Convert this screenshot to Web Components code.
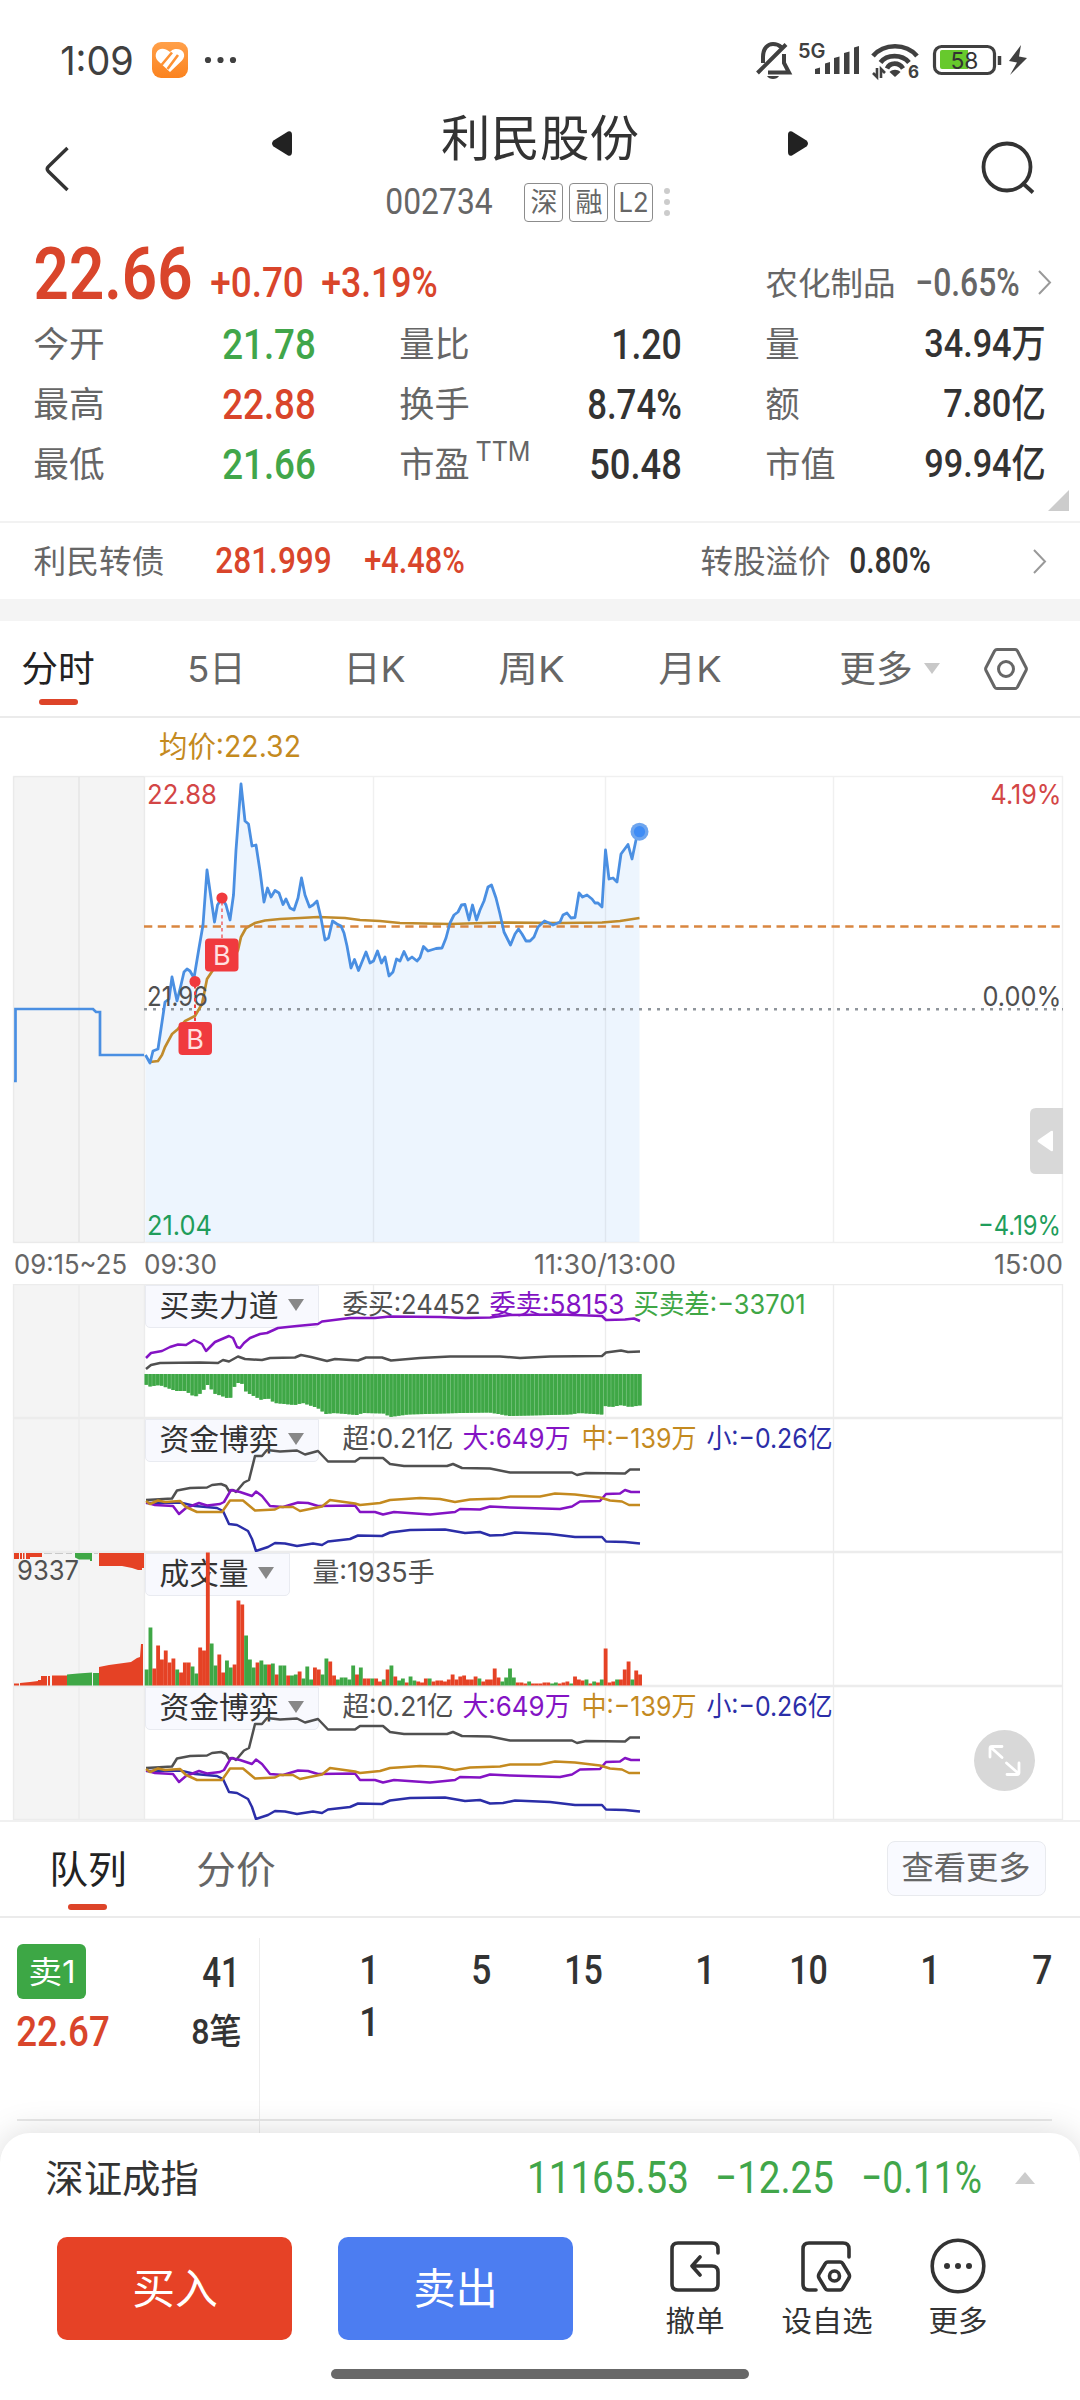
<!DOCTYPE html>
<html lang="zh-CN">
<head>
<meta charset="utf-8">
<title>利民股份 002734</title>
<style>
    html, body {
        margin: 0;
        background: #fff;
    }

    body {
        width: 1080px;
        height: 2400px;
        overflow: hidden;
        font-family: Inter, "Noto Sans CJK SC", sans-serif;
        color: #333;
    }
</style>
</head>
<body>
<stock-page></stock-page>

<script>
const SANS = 'Inter, "Noto Sans CJK SC", sans-serif';
const DIN = 'Roboto, "Noto Sans CJK SC", sans-serif';

function define(name, html, setup) {
	const template = document.createElement('template');
	template.innerHTML = html;

	window.customElements.define(name, class extends HTMLElement {
		constructor() {
			super();
			this.attachShadow({ mode: 'open' }).appendChild(template.content.cloneNode(true));
		}

		connectedCallback() {
			if (setup) setup(this, this.shadowRoot);
		}
	});
}

// one line of text, condensed or stretched to a given width
define('fit-text', `
    <style>
        :host { display: block; flex: none; }
        svg { display: block; overflow: visible; }
    </style>
    <svg><text lengthAdjust="spacingAndGlyphs" fill="currentColor"></text></svg>
`, (el, root) => {
	const w = +el.getAttribute('w');
	const size = +el.getAttribute('size');
	const din = el.hasAttribute('din');
	const svg = root.querySelector('svg');
	const text = root.querySelector('text');
	const pad = size * 0.02;
	svg.setAttribute('width', w);
	svg.setAttribute('height', size);
	text.setAttribute('x', -pad);
	text.setAttribute('y', size * (din ? 0.845 : 0.86));
	text.setAttribute('font-size', size);
	text.setAttribute('font-weight', el.getAttribute('weight') || 400);
	text.setAttribute('font-family', din ? DIN : SANS);
	text.setAttribute('textLength', w + pad * 2);
	text.textContent = el.textContent;
});

define('status-bar', `
    <style>
        :host { display: flex; height: 100px; align-items: center; padding: 20px 0 0 61px; box-sizing: border-box; color: #404040; }
        .app { margin-left: 19px; }
        .dots { margin-left: 16px; }
        .icons { margin-left: 503px; }
        svg { display: block; flex: none; }
    </style>
    <fit-text w="72" size="39">1:09</fit-text>
    <svg class="app" width="36" height="36" viewBox="0 0 36 36">
        <defs><linearGradient id="o" x2="0" y2="1"><stop stop-color="#ffa04a"/><stop offset="1" stop-color="#fb831f"/></linearGradient></defs>
        <rect width="36" height="36" rx="9" fill="url(#o)"/>
        <path d="M18 30L6 19C0 12 7 4 14 7.500q2.500 1 4 2.500 2-2.500 5-3C31 6 35 13 30 18.500z" fill="#fff"/>
        <path d="M9.500 23L20 10.500M15.500 27L26 13" stroke="#fd9235" stroke-width="2.600" fill="none"/>
    </svg>
    <svg class="dots" width="34" height="8" viewBox="0 0 34 8" fill="#404040"><circle cx="4" cy="4" r="3.100"/><circle cx="16.500" cy="4" r="3.100"/><circle cx="29" cy="4" r="3.100"/></svg>
    <svg class="icons" width="310" height="60" viewBox="741 30 310 60" fill="none" stroke="#404040" stroke-width="4">
        <path d="M757.500 73L786 44.500M763 63V57C763 48 768 44 773 44c3 0 6 1 8 3M784 54v9l5 9.500h-21"/>
        <path d="M767 76h12c-2 4-10 4-12 0z" fill="#404040" stroke="none"/>
        <text x="798" y="58" font-size="20" font-weight="600" font-family="Inter, sans-serif" textLength="27.500" lengthAdjust="spacingAndGlyphs" fill="#404040" stroke="none">5G</text>
        <path d="M815 74v-5l5-1.500V74zM825 74V63.500l5-1.500v12zM834 74V58l5.500-1.500V74zM844 74V53l5.500-1.500V74zM854 74V47.500l5-1.500v28z" fill="#404040" stroke="none"/>
        <path d="M873 56C884 43 906 43 917 56M880.500 62.500C887 54 902 54 909 62.500M887 68.500C890 62 899 62 903 68.500" stroke-width="4.700"/>
        <path d="M889.500 72c3-3 8-3 11 0l-5.500 5z" fill="#404040" stroke="none"/>
        <path d="M873 73l4 4V68M881 78v-9l4 4" stroke-width="2.600"/>
        <text x="908" y="78" font-size="17" font-weight="700" font-family="Inter, sans-serif" fill="#404040" stroke="none">6</text>
        <rect x="934.500" y="46.500" width="60" height="27" rx="7" stroke-width="3.200"/>
        <path d="M942 50h26v19h-26q-2 0-2-2V52q0-2 2-2z" fill="#67c92d" stroke="none"/>
        <text x="950.500" y="68.500" font-size="23" font-family="Inter, sans-serif" textLength="28" lengthAdjust="spacingAndGlyphs" fill="#333" stroke="none">58</text>
        <path d="M999.500 56v9" stroke-width="3.500"/>
        <path d="M1021 45l-12 16 8 1.500L1010 75l17-17-8-1.500z" fill="#404040" stroke="none"/>
    </svg>
`);

define('stock-header', `
    <style>
        :host { display: flex; height: 135px; align-items: flex-start; color: #333; }
        svg { display: block; flex: none; }
        .back { margin: 46px 0 0 44px; }
        .prev { margin: 31px 0 0 202px; }
        .center { width: 496px; display: flex; flex-direction: column; align-items: flex-start; }
        .name { margin: 14px 0 0 150px; }
        .sub { display: flex; align-items: center; margin: 19px 0 0 94px; height: 40px; }
        .code { color: #666; margin-right: 32px; }
        .tag { box-sizing: border-box; width: 39px; height: 39px; border: 1.5px solid #8c8c8c; border-radius: 4px; margin-right: 6px; display: flex; align-items: center; justify-content: center; color: #666; }
        .next { margin-top: 31px; }
        .search { margin: 41px 0 0 173px; }
    </style>
    <svg class="back" width="26" height="46" viewBox="0 0 26 46"><path d="M23.500 2L4.500 20.500q-2.500 2.500 0 5L23.500 44" fill="none" stroke="#333" stroke-width="3.400"/></svg>
    <svg class="prev" width="20" height="25" viewBox="0 0 20 25"><path d="M0 12.500q0-1.500 1.500-3L16 .500Q20-.500 20 4v17q0 4.500-4 3.500L1.500 15.500Q0 14 0 12.500z" fill="#222"/></svg>
    <div class="center">
        <fit-text class="name" w="196" size="49">利民股份</fit-text>
        <div class="sub">
            <fit-text class="code" din w="106" size="36">002734</fit-text>
            <div class="tag"><fit-text w="26" size="27">深</fit-text></div>
            <div class="tag"><fit-text w="26" size="27">融</fit-text></div>
            <div class="tag"><fit-text w="29" size="27">L2</fit-text></div>
            <svg style="margin-left:5px" width="6" height="30" viewBox="0 0 6 30" fill="#ccc"><circle cx="3" cy="4" r="3"/><circle cx="3" cy="15" r="3"/><circle cx="3" cy="26" r="3"/></svg>
        </div>
    </div>
    <svg class="next" width="20" height="25" viewBox="0 0 20 25"><path d="M20 12.500q0-1.500-1.500-3L4 .500Q0-.500 0 4v17q0 4.500 4 3.500l14.500-9Q20 14 20 12.500z" fill="#222"/></svg>
    <svg class="search" width="56" height="56" viewBox="0 0 56 56" fill="none" stroke="#333" stroke-width="3.800"><circle cx="26" cy="26" r="23.500"/><path d="M41 41.500l11 10"/></svg>
`);

define('quote-board', `
    <style>
        :host { display: block; height: 288px; color: #333; border-bottom: 2px solid #f2f2f2; box-sizing: border-box; }
        .top { display: flex; align-items: flex-start; padding-left: 35px; height: 79px; }
        .red { color: #d9452b; }
        .green { color: #41a64a; }
        .gray { color: #666; }
        .row { display: grid; grid-template-columns: 281px 366px 364px; column-gap: 0; height: 60px; padding-left: 34px; align-items: center; }
        .cell { display: flex; justify-content: space-between; align-items: center; }
        .cell + .cell { padding-left: 85px; }
        .cell fit-text:first-child { color: #666; }
        .ttm { color: #666; margin: -26px auto 0 7px; }
        svg { display: block; }
        .more { margin: -4px 0 0 1048px; }
    </style>
    <div class="top">
        <fit-text class="red" weight="600" din w="156" size="73" style="margin-top:2px">22.66</fit-text>
        <fit-text class="red" weight="500" din w="92" size="43" style="margin:26px 0 0 20px">+0.70</fit-text>
        <fit-text class="red" weight="500" din w="115" size="43" style="margin:26px 0 0 19px">+3.19%</fit-text>
        <fit-text class="gray" w="129" size="32" style="margin:32px 0 0 329px">农化制品</fit-text>
        <fit-text class="gray" weight="500" din w="103" size="39" style="margin:28px 0 0 21px">−0.65%</fit-text>
        <svg style="margin:34px 0 0 18px" width="16" height="27" viewBox="0 0 16 27"><path d="M2 2l11 11.500L2 25" fill="none" stroke="#999" stroke-width="2"/></svg>
    </div>
    <div class="row">
        <div class="cell"><fit-text w="70" size="35">今开</fit-text><fit-text class="green" weight="500" din w="92" size="43">21.78</fit-text></div>
        <div class="cell"><fit-text w="69" size="35">量比</fit-text><fit-text weight="500" din w="69" size="43">1.20</fit-text></div>
        <div class="cell"><fit-text w="33" size="35">量</fit-text><fit-text weight="500" din w="120" size="39" style="margin-top:-2px">34.94万</fit-text></div>
    </div>
    <div class="row">
        <div class="cell"><fit-text w="70" size="35">最高</fit-text><fit-text class="red" weight="500" din w="92" size="43">22.88</fit-text></div>
        <div class="cell"><fit-text w="69" size="35">换手</fit-text><fit-text weight="500" din w="93" size="43">8.74%</fit-text></div>
        <div class="cell"><fit-text w="33" size="35">额</fit-text><fit-text weight="500" din w="101" size="39" style="margin-top:-2px">7.80亿</fit-text></div>
    </div>
    <div class="row">
        <div class="cell"><fit-text w="70" size="35">最低</fit-text><fit-text class="green" weight="500" din w="92" size="43">21.66</fit-text></div>
        <div class="cell"><fit-text w="69" size="35">市盈</fit-text><fit-text class="ttm" w="54" size="27">TTM</fit-text><fit-text weight="500" din w="91" size="43">50.48</fit-text></div>
        <div class="cell"><fit-text w="69" size="35">市值</fit-text><fit-text weight="500" din w="120" size="39" style="margin-top:-2px">99.94亿</fit-text></div>
    </div>
    <svg class="more" width="21" height="21" viewBox="0 0 21 21"><path d="M21 0v21H0z" fill="#ccc"/></svg>
`);

define('bond-bar', `
    <style>
        :host { display: flex; align-items: center; height: 98px; padding-left: 34px; box-sizing: border-box; border-bottom: 22px solid #f4f4f4; color: #333; }
        .red { color: #d9452b; }
        .gray { color: #666; }
    </style>
    <fit-text class="gray" w="130" size="32">利民转债</fit-text>
    <fit-text class="red" weight="500" din w="115" size="36" style="margin-left:52px">281.999</fit-text>
    <fit-text class="red" weight="500" din w="99" size="36" style="margin-left:34px">+4.48%</fit-text>
    <fit-text class="gray" w="129" size="32" style="margin-left:237px">转股溢价</fit-text>
    <fit-text weight="500" din w="80" size="36" style="margin-left:20px">0.80%</fit-text>
    <svg style="margin-left:102px" width="16" height="27" viewBox="0 0 16 27"><path d="M2 2l11 11.500L2 25" fill="none" stroke="#999" stroke-width="2"/></svg>
`);

define('period-tabs', `
    <style>
        :host { display: flex; align-items: center; height: 97px; box-sizing: border-box; border-bottom: 2px solid #ebebeb; padding-left: 22px; color: #666; }
        .on { color: #222; position: relative; }
        .on::after { content: ""; position: absolute; left: 17px; top: 48px; width: 39px; height: 6px; border-radius: 3px; background: #dd4429; }
        svg { flex: none; display: block; }
    </style>
    <fit-text class="on" w="72" size="36">分时</fit-text>
    <fit-text w="57" size="36" style="margin-left:94px">5日</fit-text>
    <fit-text w="61" size="36" style="margin-left:99px">日K</fit-text>
    <fit-text w="65" size="36" style="margin-left:94px">周K</fit-text>
    <fit-text w="62" size="36" style="margin-left:95px">月K</fit-text>
    <fit-text w="72" size="36" style="margin-left:119px">更多</fit-text>
    <svg style="margin-left:12px" width="16" height="11" viewBox="0 0 16 11"><path d="M0 0h16L8 11z" fill="#c8c8c8"/></svg>
    <svg style="margin-left:44px" width="44" height="44" viewBox="0 0 44 44" fill="none" stroke="#666" stroke-width="3"><path d="M13 2.500h18q1.500 0 2.500 1.500L42 20.500q.800 1.500 0 3L33.500 40q-1 1.500-2.500 1.500H13q-1.500 0-2.500-1.500L2 23.500q-.800-1.500 0-3L10.500 4q1-1.500 2.500-1.500z"/><circle cx="22" cy="22" r="7.500"/></svg>
`);

// intraday price chart, drawn in page coordinates
const PRICE = '145.500,1055 150,1063 153,1051 158,1049 165,1002 169,999 172,977 177,1001 181,985 184,972 187,969 190,971 194,978 199,948 203,925 207,870 211,898 214.500,922 217.500,905 222,898 226,905 230,920 233.500,895 236,850 241,784 245,821 248.500,824 252,846 256,845 260,871 264,902 267.500,888 271,897 275,890.500 279,893 283,904.500 286,899 290,908 294,910 298,898 301.500,878 305,895 309.500,907 313,905 317,901 321,918 325,940 328.500,938 332.500,921 337,924 341,926 344,933 347,946 351,968 354.500,959.500 358.500,970.500 366,952 370,963 373.500,961 377.500,951 381.500,963 385,957 389,976 393,972 396.500,959 400,961 404,951.500 408,960 412,957 417,961 420,957.500 423.500,946.500 428,951 436,948.500 442,948 446,938 450,923 454,915 458,912 461.500,905 465,904.500 469,920 472.500,905 476.500,920 480,910 484,901 488,887 491.500,885 496,898 500,914 504,932 510.500,945 515,934 518.500,929 522,934 526,941 530,941 534,937 538,927 544.500,921 549,923 553,925 560,922 563,915 567,913 571,918 575,917.500 579,893 582.500,897 587,895 592,899 595,903 598,903 602,907 605.500,850 609,879 613,878 617,882 621,854 628,844.500 632,859 636,840 639.500,831';
const AVERAGE = '150,1062 158,1061 162,1055 165,1047 172,1034 178,1029 185,1021 195,1016 202,1004 207,979 213,970 230,965 238,950 241,937 246,928 255,923 265,920.500 280,919 300,918 318,917 345,918 360,920 380,921 400,923 450,924 500,922.500 560,923 602,922.500 620,921 639.500,918';

define('price-chart', `
    <style>
        :host { display: block; height: 566px; }
        svg { display: block; }
    </style>
    <svg width="1080" height="566" viewBox="0 718 1080 566" fill="none" font-family='Inter, "Noto Sans CJK SC", sans-serif' font-size="27.500">
        <text x="159" y="757" font-size="29.500" fill="#c48a1f" textLength="142" lengthAdjust="spacingAndGlyphs">均价:22.32</text>
        <rect x="13.500" y="776.500" width="131" height="466" fill="#f4f4f4"/>
        <polygon fill="#edf5fe" points="${PRICE} 639.500,1242 145.500,1242"/>
        <path d="M13.500 776.500H1062.500V1242.500H13.500zM79 777v465M144.500 777v465M373.500 777v465M605.500 777v465M833.500 777v465" stroke="#000" stroke-opacity=".06" stroke-width="1.500"/>
        <path d="M144 1009.300H1063" stroke="#8f959b" stroke-width="2.600" stroke-dasharray="3 6"/>
        <polyline points="14,1081 15.500,1081 15.500,1009 93,1009 96,1012 100,1012 100,1055 144,1055" stroke="#4a8fe2" stroke-width="2.700"/>
        <polyline points="${AVERAGE}" stroke="#c08b2c" stroke-width="2.700"/>
        <path d="M144 926.500H1061" stroke="#d98640" stroke-width="2.400" stroke-dasharray="8.300 5.450"/>
        <polyline points="${PRICE}" stroke="#4a8fe2" stroke-width="2.800" stroke-linejoin="round"/>
        <text x="147" y="803.500" fill="#d34646" textLength="70" lengthAdjust="spacingAndGlyphs">22.88</text>
        <text x="147" y="1005.500" fill="#505050" textLength="61" lengthAdjust="spacingAndGlyphs">21.96</text>
        <text x="147" y="1235" fill="#1f9d5b" textLength="65" lengthAdjust="spacingAndGlyphs">21.04</text>
        <text x="990.500" y="803.500" fill="#d34646" textLength="71" lengthAdjust="spacingAndGlyphs">4.19%</text>
        <text x="982.500" y="1005.500" fill="#505050" textLength="79" lengthAdjust="spacingAndGlyphs">0.00%</text>
        <text x="978" y="1235" fill="#1f9d5b" textLength="83" lengthAdjust="spacingAndGlyphs">−4.19%</text>
        <g stroke="#f04040" stroke-dasharray="3.500 3"><path d="M195 985v37" stroke-width="2"/><path d="M222 902v37" stroke-width="1.200"/></g>
        <g fill="#f03a3e"><circle cx="195" cy="981.500" r="5.600"/><circle cx="222" cy="898" r="5.600"/><rect x="178.500" y="1022" width="33.500" height="33" rx="4"/><rect x="205" y="938.500" width="33.500" height="33" rx="4"/></g>
        <g fill="#ffe0e0" font-size="27" text-anchor="middle"><text x="195.200" y="1048.500">B</text><text x="221.900" y="965">B</text></g>
        <circle cx="639.500" cy="831.700" r="9" fill="#6ea5ee"/><circle cx="639.500" cy="831.700" r="5.600" fill="#3f8cf5"/>
        <path d="M1063 1108h-27q-6 0-6 6v54q0 6 6 6h27z" fill="#d8d8d8"/>
        <path d="M1053 1132v18q0 2-2 1l-13-9q-1-1 0-2l13-9q2-1 2 1z" fill="#fff"/>
        <g fill="#666">
            <text x="14" y="1273.500" textLength="113" lengthAdjust="spacingAndGlyphs">09:15~25</text>
            <text x="144" y="1273.500" textLength="73" lengthAdjust="spacingAndGlyphs">09:30</text>
            <text x="534" y="1273.500" textLength="142" lengthAdjust="spacingAndGlyphs">11:30/13:00</text>
            <text x="994" y="1273.500" textLength="69" lengthAdjust="spacingAndGlyphs">15:00</text>
        </g>
    </svg>
`);

// every indicator pane is 134px high; its drawing lies over the title chip
const INK = '#505050', PURPLE = '#8413c4', GOLD = '#c48a1f', BLUE = '#2b2ea8', GREEN = '#3fa746', RED = '#e54225';
const polyline = (points, color) => `<polyline points="${points}" stroke="${color}" stroke-width="2.500" stroke-linejoin="round"/>`;

const FLOW = [
	['146,1503 180,1502.500 195,1506 217,1508 223,1511 229,1524 237,1525 248,1531 252,1539 256,1551 268,1547 275,1543 285,1543.500 297,1546 313,1543.500 322,1545 328,1541.500 350,1539 358,1535.500 382,1536 390,1532.500 410,1530 445,1529.500 465,1533 480,1532 490,1535.500 503,1535 515,1532.500 550,1534 575,1537 602,1537 606,1541.500 625,1542 640,1543.500', BLUE],
	['146,1500 155,1499.500 172,1498.500 177,1490.500 190,1488 207,1487.500 212,1485 221,1484 226,1486 229,1491 233,1490 236,1492 244,1482.500 249,1480 255,1456 262,1456 267,1450 280,1451.500 297,1450.500 305,1454.500 318,1451 328,1461.500 355,1461.500 360,1458 383,1458 390,1464 404,1466 447,1466 453,1464 462,1468 490,1468.500 510,1472.500 572,1472.500 577,1475 586,1473 625,1473.500 630,1469.500 640,1469.500', INK],
	['146,1502.500 155,1505 173,1506 179,1514 186,1508 199,1503 207,1505.500 220,1504 224,1502 231,1490 240,1492 252,1496 256,1491.500 262,1496 270,1506 283,1507 298,1502.500 308,1503 318,1506 355,1505.500 360,1512 375,1512 383,1514.500 394,1512 430,1514.500 455,1512 460,1509 480,1509.500 490,1506.500 510,1507.500 560,1509 572,1506.500 580,1501.500 600,1501 606,1494 620,1493.500 625,1490 631,1492 640,1492', PURPLE],
	['146,1501 150,1504 158,1500.500 165,1502 180,1501 186,1507 197,1512 222,1512 230,1500.500 243,1500.500 255,1510.500 275,1509.500 280,1507 293,1507 300,1511 322,1506.500 330,1500 355,1503.500 360,1505 380,1503 390,1500 420,1498 440,1499 455,1502 470,1499.500 500,1498.500 510,1496.500 540,1496.500 555,1493.500 575,1494.500 600,1497.500 610,1500.500 622,1501.500 629,1505 640,1505', GOLD],
].map(([points, color]) => polyline(points, color)).join('');

const ORDER_GAP = [145,1384,150,1386.5,160,1385,176,1391,186,1391,195,1397,203,1392,206,1385,210,1385,213,1393,222,1396,230,1399,234,1392,235,1383,242,1383,244,1390,250,1394,262,1400,268,1398,275,1403,295,1405,303,1403,318,1408,326,1414,335,1413,357,1415,363,1413,385,1413.5,390,1417,408,1414.5,460,1413,490,1412.5,510,1416,570,1414.5,580,1413,602,1414.5,605,1406,612,1407,622,1405,630,1407,643,1405];

function gapBars() {
	let out = '';
	let k = 0;
	for (let i = 0; i < 130; i++) {
		const x = 144.6 + i * 3.825;
		while (k < ORDER_GAP.length - 4 && ORDER_GAP[k + 2] < x + 2) k += 2;
		const t = Math.max(0, (x + 2 - ORDER_GAP[k]) / (ORDER_GAP[k + 2] - ORDER_GAP[k]));
		const y = ORDER_GAP[k + 1] + t * (ORDER_GAP[k + 3] - ORDER_GAP[k + 1]);
		out += `<rect x="${x}" y="1374" width="3.900" height="${y - 1374}" fill="#73c27a"/><rect x="${x}" y="1374" width="3.200" height="${y - 1374}" fill="#3fa746"/>`;
	}
	return out;
}

// minute volumes: colour and bar height
const VOLUME = 'g16 g58 r17 r40 r26 r35 r23 r27 g16 r13 r23 r23 g19 g12 r38 r35 r133 g42 g20 r31 r13 g25 g18 r21 r85 r81 g50 g26 g18 r23 g25 g21 r21 g22 r11 g20 g20 r10 g10 g11 r14 g7 g19 g6 r18 r16 g11 g27 r24 r10 g6 g8 g8 g6 g20 r11 g18 r7 r7 g7 r7 r4 g6 r16 g20 r9 g5 g7 r3 g9 g5 r4 r3 r7 g7 r4 r5 r5 r4 r6 r11 r6 r9 r10 r6 r6 r9 g7 r4 r6 r6 r17 r8 g4 g8 g17 g8 r3 r3 r2 g4 r2 r2 r2 r3 r3 g2 g3 r2 r3 r4 g2 r9 r6 r5 g6 r2 g4 r3 g6 r37 r3 r4 g6 r6 r16 r24 g6 r15 r11';

function volumeBars() {
	let out = VOLUME.split(' ').map((v, i) => {
		const h = +v.slice(1);
		return `<rect x="${144.7 + i * 3.825}" y="${1685.5 - h}" width="3.850" height="${h}" fill="${v[0] === 'r' ? RED : GREEN}"/>`;
	}).join('');
	// call auction, matched volume below and unmatched on top
	out += `<path fill="${RED}" d="M14 1685.500v-2h5v2zM20 1685.500v-2.500l10-1 8-1v-1h3V1676h6v9.500zM48 1685.500V1676h2v9.500zM52 1685.500v-10h15v10zM99 1685.500V1667l10-2 22-3 6-4 3-1 1-13h2v41.500zM14 1553h5v6h-5zM20 1553h2v6h-2zM23 1553h1.500v6H23zM26 1553h16v4h-12v2h-4zM99 1553h45v15h-2v2h-4l-6-2-10-2H99z"/>`;
	out += `<path fill="${GREEN}" d="M67 1685.500v-11l11-1 14-1v13zM93 1685.500V1673h6v12.500zM75 1553h17v8h-2v-1.500h-11l-4-2z"/>`;
	out += '<path d="M44 1553.500h28M94 1553.500h4" stroke="#c9c9c9" stroke-dasharray="8 3"/>';
	return out;
}

const PANES = {
	power: {
		y: 1284, title: '买卖力道', chip: 174.5, textWidth: 118,
		legend: [['委买:24452', 137, INK, 0], ['委卖:58153', 134, PURPLE, 10], ['买卖差:-33701', 171, GREEN, 10]],
		draw: gapBars() + polyline('146,1358 151,1353 162,1351 170,1347 178,1344.500 186,1345 194,1340 202,1344 206,1351 215,1342 229,1336 233,1338 237,1347 240,1348 244,1343 250,1338 260,1334 267,1333 278,1328 297,1326 318,1324 322,1321.500 350,1318 375,1318 390,1316.500 440,1317 465,1318 490,1317.500 510,1315 560,1314.500 602,1316 606,1320 625,1319.500 634,1318.500 640,1321', PURPLE)
			+ polyline('146,1369 151,1365 160,1363 200,1362.500 218,1363 223,1360 229,1361.500 238,1356.500 245,1359 262,1360 270,1358 295,1357.500 301,1355 311,1357 327,1361 335,1359 358,1360.500 366,1357.500 382,1357.500 391,1360.500 420,1358 450,1356.500 500,1356.500 520,1358 550,1356.500 602,1356 606,1352.500 621,1350.500 628,1352 640,1351.500', INK)
	},
	flow: {
		y: 1418, title: '资金博弈', chip: 174.5, textWidth: 118,
		legend: [['超:0.21亿', 110, INK, 0], ['大:649万', 107, PURPLE, 10], ['中:-139万', 114, GOLD, 12], ['小:-0.26亿', 125, BLUE, 11]],
		draw: FLOW
	},
	volume: {
		y: 1552, title: '成交量', chip: 145, textWidth: 88,
		legend: [['量:1935手', 121, INK, 0]],
		draw: volumeBars() + `<text x="17" y="1580" font-size="27.500" fill="#505050" textLength="62" lengthAdjust="spacingAndGlyphs">9337</text>`
	}
};

define('indicator-pane', `
    <style>
        :host { display: flex; position: relative; height: 134px; align-items: flex-start; padding-left: 144.5px; box-sizing: border-box; }
        svg.plot, svg.grid { position: absolute; left: 0; top: 0; }
        .chip { position: relative; display: flex; align-items: center; gap: 10px; box-sizing: border-box; height: 43.500px; padding: 0 0 2px 14px; background: #f8f9fe; border: 1.5px solid #e9ebf1; border-radius: 0 0 5px 5px; color: #333; margin-top: .500px; }
        .legend { position: relative; display: flex; margin: 5.500px 0 0 23.500px; }
        svg { display: block; }
    </style>
    <svg class="grid" width="1080" height="134" viewBox="0 0 1080 134" fill="none">
        <rect x="13.500" y="0" width="131" height="134" fill="#f4f4f4"/>
        <path d="M13.500 0V134M79 0V134M144.500 0V134M373.500 0V134M605.500 0V134M833.500 0V134M1062.500 0V134M13.500 .500H1062.500M13.500 133.500H1062.500" stroke="#ececec" stroke-width="1.300"/>
    </svg>
    <div class="chip"></div>
    <div class="legend"></div>
    <svg class="plot" width="1080" height="134" fill="none"></svg>
`, (el, root) => {
	const pane = PANES[el.getAttribute('kind')];
	const chip = root.querySelector('.chip');
	chip.style.width = pane.chip + 'px';
	chip.innerHTML = `<fit-text w="${pane.textWidth}" size="30">${pane.title}</fit-text><svg width="16" height="12" viewBox="0 0 16 12"><path d="M0 0h16L8 12z" fill="#888"/></svg>`;
	root.querySelector('.legend').innerHTML = pane.legend
		.map(([text, w, color, gap]) => `<fit-text w="${w}" size="27.500" style="color:${color};margin-left:${gap}px">${text.replace('-', '−')}</fit-text>`)
		.join('');
	const plot = root.querySelector('.plot');
	plot.setAttribute('viewBox', `0 ${pane.y} 1080 134`);
	plot.setAttribute('font-family', SANS);
	plot.innerHTML = pane.draw;
});

define('expand-button', `
    <style>
        :host { position: absolute; left: 974px; top: 1730px; width: 61px; height: 61px; }
        svg { display: block; overflow: visible; }
    </style>
    <svg width="61" height="61" viewBox="0 0 61 61" fill="none" stroke="#fff" stroke-width="2.800" stroke-linecap="round"><circle cx="30.500" cy="30.500" r="30.500" fill="#d8d8d8" stroke="none"/><path d="M28 16.500H18q-2 0-2 2V27M17 17.500L28 27.500M32.500 33L44 43M45 33v9.500q0 2-2 2H33"/></svg>
`);

define('queue-tabs', `
    <style>
        :host { display: flex; align-items: center; height: 98px; box-sizing: border-box; border-top: 2px solid #f0f0f0; border-bottom: 2px solid #ebebeb; padding-left: 50px; color: #666; }
        .on { color: #222; position: relative; }
        .on::after { content: ""; position: absolute; left: 18px; top: 54px; width: 39px; height: 6px; border-radius: 3px; background: #dd4429; }
        .all { margin-left: 612px; width: 159px; height: 55px; box-sizing: border-box; border: 1.5px solid #e8eaee; border-radius: 8px; background: #f9faff; display: flex; align-items: center; justify-content: center; padding: 0 1px 3px 0; margin-top: -2px; }
    </style>
    <fit-text class="on" w="76" size="38">队列</fit-text>
    <fit-text w="78" size="38" style="margin-left:71px">分价</fit-text>
    <div class="all"><fit-text w="128" size="32">查看更多</fit-text></div>
`);

define('order-queue', `
    <style>
        :host { display: flex; flex-direction: column; height: 215px; box-sizing: border-box; padding: 20px 28px 0 17px; color: #333; }
        .level { display: flex; height: 195px; }
        .side { width: 242.5px; box-sizing: border-box; border-right: 1.5px solid #ededed; padding: 6px 18px 0 0; display: grid; grid-template-columns: 1fr auto; grid-template-rows: 55px 60px; align-content: start; align-items: center; justify-items: start; }
        .badge { width: 69px; height: 55px; border-radius: 6px; background: #3da745; color: #fff; display: flex; align-items: center; justify-content: center; }
        .orders { flex: 1; display: grid; grid-template-columns: repeat(7, 112.2px); grid-auto-rows: 52px; justify-content: end; justify-items: end; align-content: start; align-items: center; padding-top: 5.5px; }
        .rule { height: 2px; margin-top: -14.500px; background: #e8e8e8; flex: none; }
    </style>
    <div class="level">
        <div class="side">
            <div class="badge"><fit-text w="46" size="31">卖1</fit-text></div>
            <fit-text weight="500" din w="36" size="42" style="margin:0 2px 0 0;justify-self:end">41</fit-text>
            <fit-text weight="500" din w="92" size="42" style="color:#d9452b;margin-top:4px">22.67</fit-text>
            <fit-text weight="500" din w="49" size="35" style="margin-top:4px">8笔</fit-text>
        </div>
        <div class="orders"></div>
    </div>
    <div class="rule"></div>
`, (el, root) => {
	root.querySelector('.orders').innerHTML = ['1', '5', '15', '1', '10', '1', '7', '1']
		.map(n => `<fit-text weight="500" din w="${n.length * 18.5}" size="41.500" style="margin-right:${n === '1' ? 0.5 : 1}px">${n}</fit-text>`)
		.join('');
});

define('tool-button', `
    <style>
        :host { display: flex; flex-direction: column; align-items: center; gap: 13px; color: #333; }
        ::slotted(svg) { display: block; }
    </style>
    <slot name="icon"></slot>
    <slot></slot>
`);

define('trade-sheet', `
    <style>
        :host { display: block; position: relative; height: 267px; background: #fff; border-radius: 30px 30px 0 0; box-shadow: 0 0 34px rgba(0, 0, 0, .15); color: #333; }
        .index { display: flex; align-items: center; padding: 22px 0 0 46px; height: 45px; }
        .green { color: #41a64a; }
        .actions { display: flex; align-items: flex-start; padding: 37px 0 0 57px; height: 103px; }
        .button { width: 235px; height: 103px; border-radius: 10px; color: #fff; display: flex; align-items: center; justify-content: center; margin-right: 46px; }
        .buy { background: #e64226; }
        .sell { background: #4c7df1; }
        tool-button { margin-top: 1px; }
        .home { width: 418px; height: 10px; border-radius: 5px; background: #686868; margin: 29px auto 0; }
        svg { display: block; fill: none; stroke: #333; stroke-width: 3.6px; stroke-linecap: round; stroke-linejoin: round; }
    </style>
    <div class="index">
        <fit-text w="152" size="38">深证成指</fit-text>
        <fit-text class="green" din w="160" size="45" style="margin-left:330px">11165.53</fit-text>
        <fit-text class="green" din w="117" size="45" style="margin-left:28px">−12.25</fit-text>
        <fit-text class="green" din w="119" size="45" style="margin-left:29px">−0.11%</fit-text>
        <svg style="margin-left:34px;stroke:none" width="20" height="12" viewBox="0 0 20 12"><path d="M0 12L10 0l10 12z" fill="#ccc"/></svg>
    </div>
    <div class="actions">
        <div class="button buy"><fit-text w="84" size="42">买入</fit-text></div>
        <div class="button sell"><fit-text w="83" size="42">卖出</fit-text></div>
        <tool-button style="width:58px;margin-left:47px">
            <svg slot="icon" width="58" height="56" viewBox="666 2238 58 56"><path d="M718 2253v-4q0-6-6-6h-34q-6 0-6 6v35q0 6 6 6h34q6 0 6-6v-12q0-6-6-6h-18M700 2257l-8 9 8 9"/></svg>
            <fit-text w="58" size="29">撤单</fit-text>
        </tool-button>
        <tool-button style="width:90px;margin-left:58px">
            <svg slot="icon" width="90" height="56" viewBox="782 2238 90 56"><path d="M849 2257v-8q0-6-6-6h-34q-6 0-6 6v35q0 6 6 6h7M828 2262h12q2 0 3 2l6 10q1 2 0 4l-6 10q-1 2-3 2h-12q-2 0-3-2l-6-10q-1-2 0-4l6-10q1-2 3-2z"/><circle cx="834.500" cy="2276" r="5"/></svg>
            <fit-text w="90" size="29">设自选</fit-text>
        </tool-button>
        <tool-button style="width:58px;margin-left:57px">
            <svg slot="icon" width="58" height="56" viewBox="929 2238 58 56"><circle cx="958" cy="2266" r="25.800"/><g fill="#333" stroke="none"><circle cx="947" cy="2266" r="3"/><circle cx="958" cy="2266" r="3"/><circle cx="969" cy="2266" r="3"/></g></svg>
            <fit-text w="58" size="29">更多</fit-text>
        </tool-button>
    </div>
    <div class="home"></div>
`);

define('stock-page', `
    <style>
        :host { display: flex; flex-direction: column; position: relative; width: 1080px; height: 2400px; overflow: hidden; background: #fff; }
        :host > * { flex: none; }
    </style>
    <status-bar></status-bar>
    <stock-header></stock-header>
    <quote-board></quote-board>
    <bond-bar></bond-bar>
    <period-tabs></period-tabs>
    <price-chart></price-chart>
    <indicator-pane kind="power"></indicator-pane>
    <indicator-pane kind="flow"></indicator-pane>
    <indicator-pane kind="volume"></indicator-pane>
    <indicator-pane kind="flow"></indicator-pane>
    <queue-tabs></queue-tabs>
    <order-queue></order-queue>
    <trade-sheet></trade-sheet>
    <expand-button></expand-button>
`);
</script>
</body>
</html>
